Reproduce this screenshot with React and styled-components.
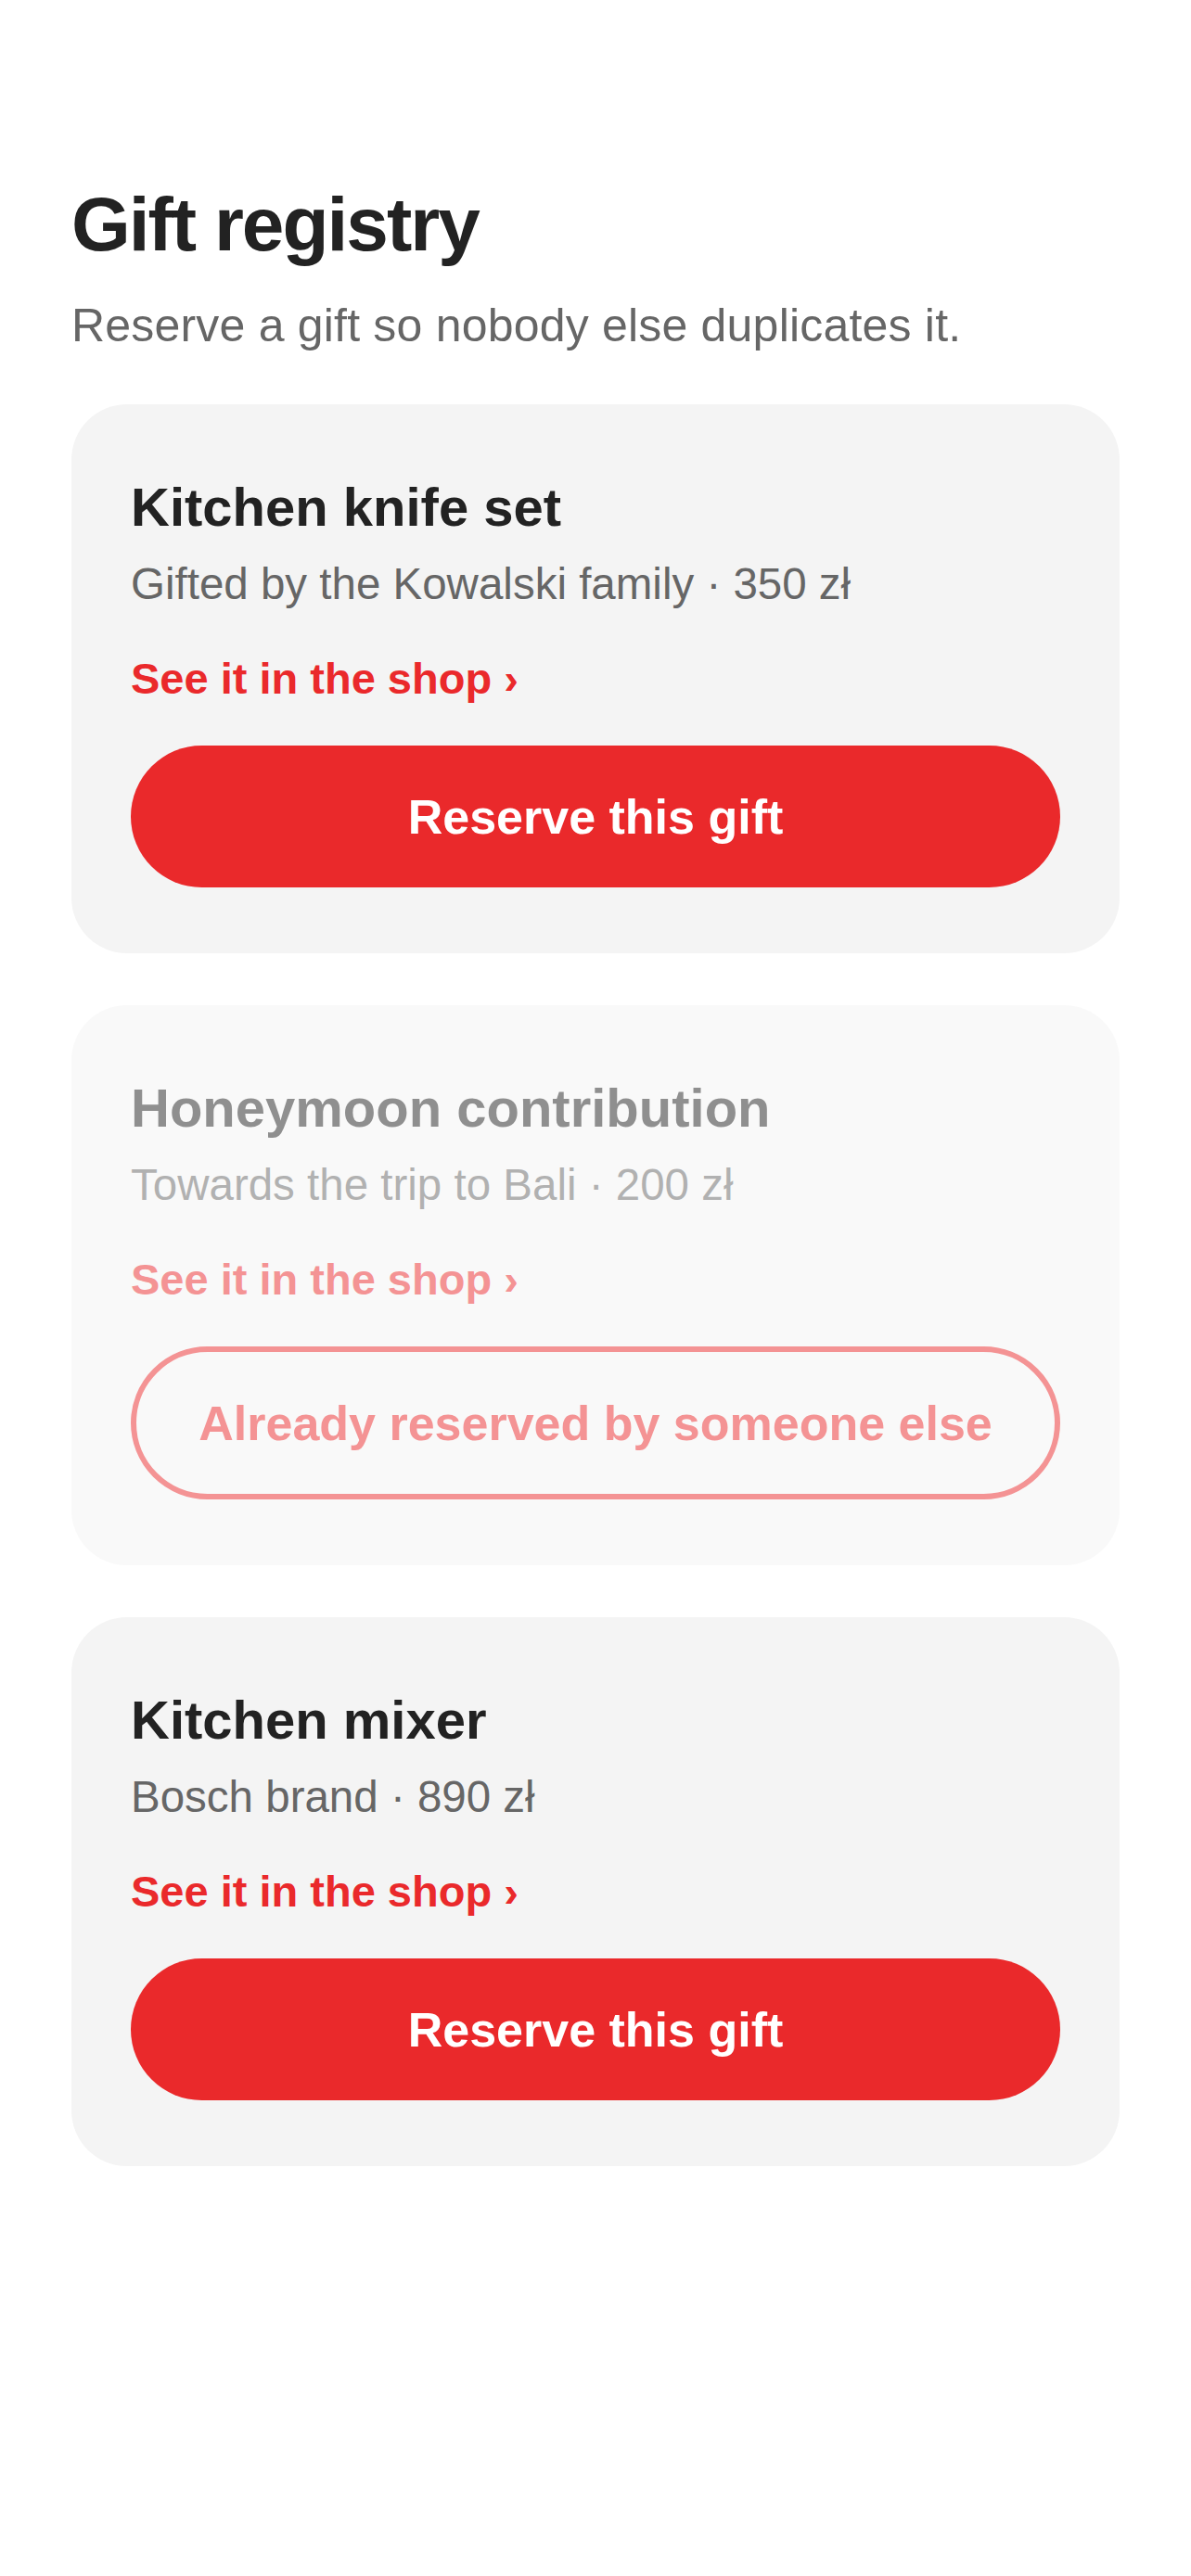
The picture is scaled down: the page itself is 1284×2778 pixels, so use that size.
import React from "react";
import styled, { createGlobalStyle } from "styled-components";

const GlobalStyle = createGlobalStyle`
  html, body {
    margin: 0;
    padding: 0;
    background: #ffffff;
  }

  body {
    font-family: "Liberation Sans", Arial, Helvetica, sans-serif;
    -webkit-font-smoothing: antialiased;
  }

  * {
    box-sizing: border-box;
  }
`;

const RED = "#ea292b";

const Page = styled.main`
  min-height: 2778px;
  padding: 192px 77px 120px;
  display: flex;
  flex-direction: column;
`;

const Heading = styled.h1`
  margin: 0;
  font-size: 82px;
  line-height: 100px;
  font-weight: 700;
  letter-spacing: -2px;
  color: #222222;
`;

const Intro = styled.p`
  margin: 28px 0 0;
  font-size: 50px;
  line-height: 62px;
  letter-spacing: 0.2px;
  color: #666666;
`;

const List = styled.section`
  margin-top: 54px;
  display: flex;
  flex-direction: column;
  gap: 56px;
`;

const Card = styled.article`
  background: #f4f4f4;
  border-radius: 60px;
  padding: 76px 64px 71px;
  display: flex;
  flex-direction: column;
  opacity: ${(p) => (p.$reserved ? 0.5 : 1)};
`;

const Name = styled.h2`
  margin: 0;
  font-size: 58px;
  line-height: 70px;
  font-weight: 700;
  color: #222222;
`;

const Meta = styled.p`
  margin: 18px 0 0;
  font-size: 47.5px;
  line-height: 60px;
  color: #666666;
`;

const ShopLink = styled.a`
  margin-top: 43px;
  align-self: flex-start;
  font-size: 47px;
  line-height: 58px;
  font-weight: 700;
  color: ${RED};
  text-decoration: none;
`;

const ReserveButton = styled.button`
  margin-top: 43px;
  height: ${(p) => (p.$outline ? "165px" : "153px")};
  width: 100%;
  border-radius: 999px;
  border: ${(p) => (p.$outline ? `6px solid ${RED}` : "none")};
  background: ${(p) => (p.$outline ? "transparent" : RED)};
  color: ${(p) => (p.$outline ? RED : "#ffffff")};
  font-family: inherit;
  font-size: 52px;
  font-weight: 700;
  display: flex;
  align-items: center;
  justify-content: center;
  cursor: ${(p) => (p.$outline ? "default" : "pointer")};
`;

const gifts = [
  {
    id: 1,
    name: "Kitchen knife set",
    meta: "Gifted by the Kowalski family · 350 zł",
    reserved: false,
  },
  {
    id: 2,
    name: "Honeymoon contribution",
    meta: "Towards the trip to Bali · 200 zł",
    reserved: true,
  },
  {
    id: 3,
    name: "Kitchen mixer",
    meta: "Bosch brand · 890 zł",
    reserved: false,
  },
];

function GiftCard({ gift }) {
  return (
    <Card $reserved={gift.reserved}>
      <Name>{gift.name}</Name>
      <Meta>{gift.meta}</Meta>
      <ShopLink href="#">See it in the shop ›</ShopLink>
      {gift.reserved ? (
        <ReserveButton $outline disabled>
          Already reserved by someone else
        </ReserveButton>
      ) : (
        <ReserveButton>Reserve this gift</ReserveButton>
      )}
    </Card>
  );
}

export default function App() {
  return (
    <>
      <GlobalStyle />
      <Page>
        <Heading>Gift registry</Heading>
        <Intro>Reserve a gift so nobody else duplicates it.</Intro>
        <List>
          {gifts.map((gift) => (
            <GiftCard key={gift.id} gift={gift} />
          ))}
        </List>
      </Page>
    </>
  );
}
